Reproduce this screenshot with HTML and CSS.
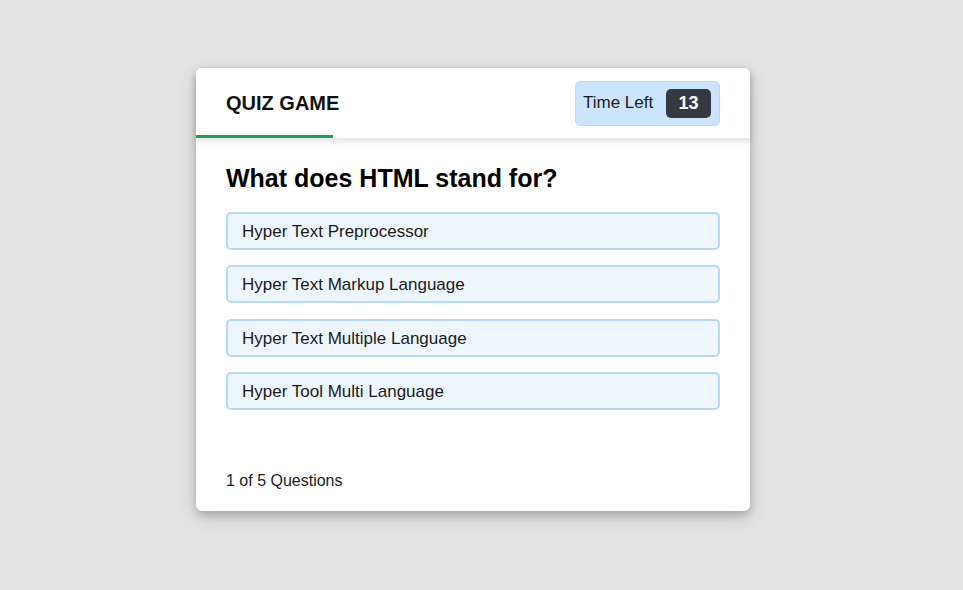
FILE: index.html
```html
<!DOCTYPE html>
<html>
<head>
<meta charset="utf-8">
<link rel="stylesheet" href="styles.css">
</head>
<body>
<div class="page">
  <div class="quiz-box">
    <header class="quiz-header">
      <div class="title">QUIZ GAME</div>
      <div class="timer">
        <span class="timer-label">Time Left</span>
        <span class="timer-sec">13</span>
      </div>
      <div class="time-line"></div>
    </header>
    <section class="quiz-body">
      <div class="question">What does HTML stand for?</div>
      <div class="options">
        <div class="option">Hyper Text Preprocessor</div>
        <div class="option">Hyper Text Markup Language</div>
        <div class="option">Hyper Text Multiple Language</div>
        <div class="option">Hyper Tool Multi Language</div>
      </div>
    </section>
    <footer class="quiz-footer">
      <span class="total">1 of 5 Questions</span>
    </footer>
  </div>
</div>
</body>
</html>
```
FILE: styles.css
```css
* { box-sizing: border-box; }
html, body { margin: 0; padding: 0; }
body {
  background: #e3e3e3;
  font-family: "Liberation Sans", Arial, sans-serif;
  width: 963px;
  height: 590px;
  overflow: hidden;
}
.page {
  padding: 68px 0 0 196px;
}
.quiz-box {
  width: 554px;
  height: 443px;
  background: #fff;
  border-radius: 6px;
  box-shadow: 0 4px 8px 0 rgba(0,0,0,0.2), 0 6px 20px 0 rgba(0,0,0,0.12);
  display: flex;
  flex-direction: column;
}
.quiz-header {
  position: relative;
  height: 70px;
  padding: 0 30px;
  display: flex;
  align-items: center;
  justify-content: space-between;
  border-radius: 6px 6px 0 0;
  box-shadow: 0 3px 5px 1px rgba(0,0,0,0.1);
  z-index: 1;
  background: #fff;
}
.title {
  font-size: 20px;
  font-weight: bold;
  color: #111;
}
.timer {
  width: 145px;
  height: 45px;
  background: #cce5ff;
  border: 1px solid #b8daff;
  border-radius: 5px;
  padding: 0 8px 0 7px;
  display: flex;
  align-items: center;
  justify-content: space-between;
  color: #1b1b1b;
}
.timer-label {
  font-size: 17px;
}
.timer-sec {
  width: 45px;
  height: 29px;
  line-height: 29px;
  text-align: center;
  background: #343a40;
  color: #fff;
  border-radius: 5px;
  font-size: 18px;
  font-weight: bold;
}
.time-line {
  position: absolute;
  left: 0;
  bottom: 0;
  width: 137px;
  height: 3px;
  background: #17a25a;
}
.quiz-body {
  padding: 25px 30px 0 30px;
  flex: 1;
}
.question {
  font-size: 25px;
  font-weight: bold;
  color: #000;
  line-height: 29px;
  padding-top: 1px;
}
.options {
  padding-top: 19px;
  display: flex;
  flex-direction: column;
  gap: 15.3px;
}
.option {
  background: #eff7fe;
  border: 2px solid #b6d9fb;
  border-radius: 5px;
  height: 38px;
  padding: 2px 14px 0 14px;
  display: flex;
  align-items: center;
  font-size: 17px;
  color: #1a1a1a;
}
.quiz-footer {
  height: 60px;
  padding: 0 30px;
  display: flex;
  align-items: center;
}
.total {
  font-size: 16px;
  color: #1a1a1a;
}
```
